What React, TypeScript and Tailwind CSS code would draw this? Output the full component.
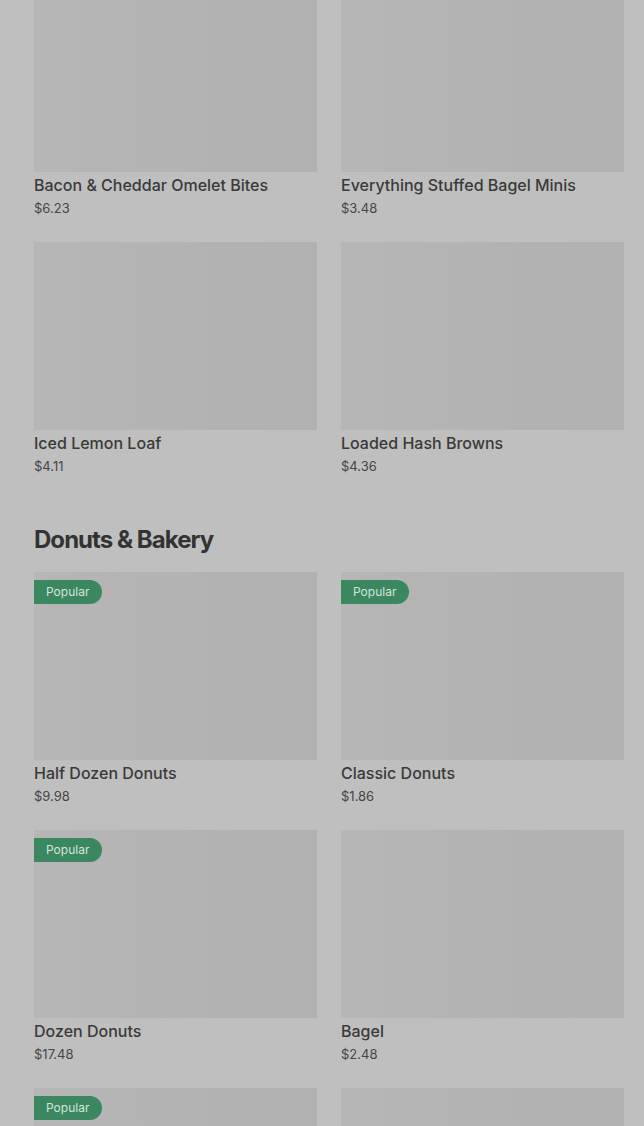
import React from 'react';

// ============================================================
// MENU GRID - dimmed under overlay
// ============================================================

interface Item {
    name: string;
    price: string;
    popular?: boolean;
}

const topItems: Item[] = [
    { name: 'Bacon & Cheddar Omelet Bites', price: '$6.23' },
    { name: 'Everything Stuffed Bagel Minis', price: '$3.48' },
    { name: 'Iced Lemon Loaf', price: '$4.11' },
    { name: 'Loaded Hash Browns', price: '$4.36' },
];

const bakeryItems: Item[] = [
    { name: 'Half Dozen Donuts', price: '$9.98', popular: true },
    { name: 'Classic Donuts', price: '$1.86', popular: true },
    { name: 'Dozen Donuts', price: '$17.48', popular: true },
    { name: 'Bagel', price: '$2.48' },
    { name: '', price: '', popular: true },
    { name: '', price: '' },
];

const font = { fontFamily: 'Inter, "Liberation Sans", sans-serif' };

const Card: React.FC<{ item: Item }> = ({ item }) => (
    <div className="flex flex-col">
        <div className="relative h-[188px] bg-gradient-to-r from-[#b6b6b6] via-[#b3b3b3] to-[#b1b1b1]">
            {item.popular && (
                <span className="absolute left-0 top-[8px] flex h-[24px] items-center rounded-r-full bg-[#3b8760] pl-[12px] pr-[13px] text-[12px] text-[#d3e5da]">
                    Popular
                </span>
            )}
        </div>
        <span className="mt-[2px] text-[16px] leading-[22px] font-medium text-[#3a3a3a]">{item.name}</span>
        <span className="mt-[2px] text-[13px] leading-[20px] text-[#464646]">{item.price}</span>
    </div>
);

export default function App() {
    return (
        <div className="h-[1126px] overflow-hidden bg-[#bfbfbf] pl-[34px] pr-[20px]" style={font}>
            {/* scrolled: first row's photos cut at the top */}
            <div className="-mt-[16px] grid grid-cols-2 gap-x-[24px] gap-y-[24px]">
                {topItems.map((it, i) => (
                    <Card key={i} item={it} />
                ))}
            </div>

            <h2 className="mt-[48px] mb-[16px] text-[24px] leading-[32px] font-bold tracking-[-0.04em] text-[#333333]">
                Donuts &amp; Bakery
            </h2>

            <div className="grid grid-cols-2 gap-x-[24px] gap-y-[24px]">
                {bakeryItems.map((it, i) => (
                    <Card key={i} item={it} />
                ))}
            </div>
        </div>
    );
}
